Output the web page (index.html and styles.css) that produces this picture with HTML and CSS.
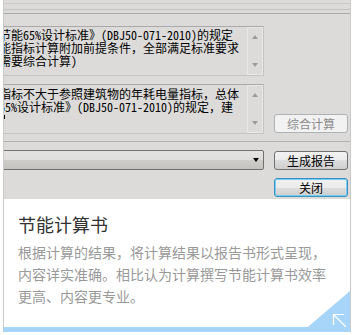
FILE: index.html
```html
<!DOCTYPE html>
<html>
<head>
    <title>节能计算书</title>
    <link rel="stylesheet" href="styles.css">
</head>
<body>
    <div class="card">
        <div class="shot">
            <div class="rule rule-1"></div>
            <div class="rule rule-2"></div>
            <div class="rule rule-3"></div>

            <div class="dlg">
                <div class="memo">
                    <div class="memo-text">节能65%设计标准》(DBJ50-071-2010)的规定<br>能指标计算附加前提条件，全部满足标准要求<br>需要综合计算)</div>
                    <div class="memo-scroll"><i class="arrow-up"></i><i class="arrow-down"></i></div>
                </div>
                <div></div>

                <div class="memo memo-second">
                    <div class="memo-text">指标不大于参照建筑物的年耗电量指标，总体<br>65%设计标准》(DBJ50-071-2010)的规定，建<br><span class="caret"></span></div>
                    <div class="memo-scroll"><i class="arrow-up"></i><i class="arrow-down"></i></div>
                </div>
                <div class="btn-cell"><button class="btn" disabled>综合计算</button></div>

                <div class="sep"></div>

                <div class="combo"><i class="combo-arrow"></i></div>
                <div class="btn-cell"><button class="btn">生成报告</button></div>

                <div></div>
                <div class="btn-cell"><button class="btn btn-default">关闭</button></div>
            </div>
        </div>

        <div class="card-body">
            <h3 class="card-title">节能计算书</h3>
            <p class="card-desc">根据计算的结果，将计算结果以报告书形式呈现，内容详实准确。相比认为计算撰写节能计算书效率更高、内容更专业。</p>
        </div>

        <span class="corner">
            <svg width="15" height="15" viewBox="0 0 15 15" fill="none" stroke="#ffffff" stroke-width="1.2">
                <path d="M14 14 L1.5 1.5"/>
                <path d="M1 1.5 H12"/>
                <path d="M1.5 1 V12"/>
            </svg>
        </span>
    </div>
</body>
</html>
```

FILE: styles.css
```css
:root {
    --dialog-bg: #dcdbd9;
    --card-border: #c9c9c9;
    --accent: #a6d5f9;
    --dialog-font: "Noto Sans Mono CJK SC", "Noto Sans CJK SC", sans-serif;
}

* {
    margin: 0;
    padding: 0;
    box-sizing: border-box;
}

body {
    background-color: #ffffff;
    padding: 0 4px 3px 3px;
    font-family: "Noto Sans CJK SC", sans-serif;
}

/* ========== Card ========== */
.card {
    position: relative;
    overflow: hidden;
    background-color: #ffffff;
    border-left: 1px solid var(--card-border);
    border-right: 1px solid var(--card-border);
    border-bottom: 5px solid var(--accent);
}

/* ========== Dialog screenshot ========== */
.shot {
    background-color: var(--dialog-bg);
    padding: 3px 0 2px 0;
    font-family: var(--dialog-font);
    font-size: 12px;
    color: #000000;
}

.rule {
    height: 1px;
}

.rule-1 {
    background-color: #c9c9c7;
}

.rule-2 {
    margin-top: 5px;
    background-color: #c2c2c0;
}

.rule-3 {
    margin-top: 3px;
    background-color: #a9a9a7;
}

.dlg {
    display: grid;
    grid-template-columns: 284px 74px;
    column-gap: 10px;
    row-gap: 8px;
    margin: 12px 2px 0 -24px;
}

.memo {
    height: 50px;
    display: flex;
    border: 1px solid #c4c4c2;
    border-top-color: #a9a9a9;
}

.memo-text {
    flex: 1;
    padding: 1px 0 0 18px;
    line-height: 13px;
    white-space: nowrap;
    overflow: hidden;
}

.memo-second .memo-text {
    padding-top: 2px;
}

.caret {
    display: inline-block;
    width: 1px;
    height: 4px;
    margin: 2px 0 0 5px;
    vertical-align: top;
    background-color: #000000;
}

.memo-scroll {
    width: 16px;
    display: flex;
    flex-direction: column;
    justify-content: space-between;
    align-items: center;
    padding: 8px 0;
    box-shadow: inset 0 0 0 1px #e8e8e6;
}

.arrow-up,
.arrow-down {
    width: 0;
    height: 0;
    border-left: 3.5px solid transparent;
    border-right: 3.5px solid transparent;
}

.arrow-up {
    border-bottom: 4px solid #9c9c9c;
}

.arrow-down {
    border-top: 4px solid #9c9c9c;
}

.sep {
    grid-column: 1 / -1;
    height: 1px;
    margin: -1px -2px 0 0;
    background-color: #b3b3b1;
}

.combo {
    height: 20px;
    display: flex;
    align-items: center;
    justify-content: flex-end;
    padding-right: 4px;
    border: 1px solid #707070;
    border-radius: 0 2px 2px 0;
    background: linear-gradient(#e4e3e1 0%, #dfdedc 50%, #cfcdca 50%, #c5c3bf 100%);
}

.combo-arrow {
    width: 0;
    height: 0;
    border-left: 3.5px solid transparent;
    border-right: 3.5px solid transparent;
    border-top: 4px solid #000000;
}

.btn-cell {
    align-self: end;
}

.btn {
    display: block;
    width: 74px;
    height: 19px;
    border: 1px solid #707070;
    border-radius: 3px;
    background: linear-gradient(#f2f2f2 0%, #ebebeb 50%, #dddddd 50%, #cfcfcf 100%);
    font-family: var(--dialog-font);
    font-size: 12px;
    line-height: 17px;
    color: #000000;
}

.btn:disabled {
    margin-bottom: 1px;
    border-color: #adb2b5;
    background: #f2f2f2;
    color: #8b8b8b;
}

.btn-default {
    border-color: #3c8fc0;
    box-shadow: inset 0 0 0 1px #6fd0f2;
}

/* ========== Card text ========== */
.card-body {
    height: 128px;
    padding: 13px 15px 0 14px;
}

.card-title {
    font-size: 18px;
    font-weight: normal;
    line-height: 24px;
    color: #333333;
}

.card-desc {
    margin-top: 5px;
    font-size: 14px;
    line-height: 22px;
    color: #999999;
}

.corner {
    position: absolute;
    right: 0;
    bottom: -5px;
    width: 48px;
    height: 41px;
    background-color: var(--accent);
    clip-path: polygon(100% 0, 100% 100%, 0 100%);
}

.corner svg {
    position: absolute;
    right: 3px;
    bottom: 4px;
}
```
